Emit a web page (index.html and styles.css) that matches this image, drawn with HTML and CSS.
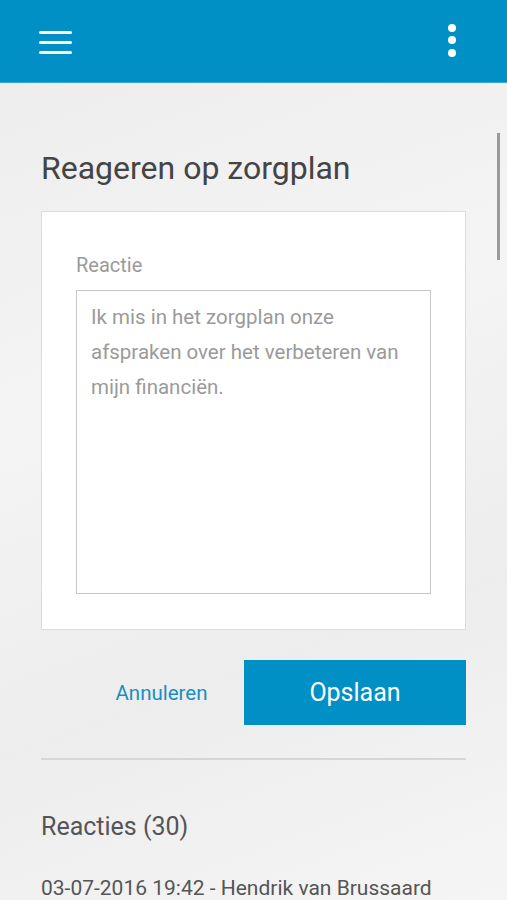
FILE: index.html
```html
<!DOCTYPE html>
<html>
<head>
    <link rel="stylesheet" href="styles.css">
</head>
<body>
    <div class="topbar">
        <svg class="icon" width="36" height="26" viewBox="0 0 36 26">
            <rect x="2" y="3" width="33" height="3" rx="1.5" fill="#fff"/>
            <rect x="2" y="13" width="33" height="3" rx="1.5" fill="#fff"/>
            <rect x="2" y="23" width="33" height="3" rx="1.5" fill="#fff"/>
        </svg>
        <svg class="icon" width="12" height="34" viewBox="0 0 12 34">
            <circle cx="6" cy="4" r="4" fill="#fff"/>
            <circle cx="6" cy="16" r="4" fill="#fff"/>
            <circle cx="6" cy="29" r="4" fill="#fff"/>
        </svg>
    </div>

    <div class="page">
        <div class="scrollbar"></div>
        <h1>Reageren op zorgplan</h1>

        <div class="card">
            <label class="label">Reactie</label>
            <div class="textarea">Ik mis in het zorgplan onze afspraken over het verbeteren van mijn financiën.</div>
        </div>

        <div class="actions">
            <a class="link">Annuleren</a>
            <button class="btn">Opslaan</button>
        </div>

        <hr class="divider">

        <h2>Reacties (30)</h2>
        <p class="meta">03-07-2016 19:42 - Hendrik van Brussaard</p>
    </div>
</body>
</html>
```

FILE: styles.css
```css
* {
    margin: 0;
    padding: 0;
    box-sizing: border-box;
    font-family: Roboto, 'Noto Sans', sans-serif;
}

body {
    width: 507px;
    height: 900px;
    overflow: hidden;
    background: linear-gradient(160deg, #ececec 0%, #f4f4f4 40%, #ededed 70%, #f5f5f5 100%);
}

.topbar {
    height: 83px;
    background: #0090c6;
    border-bottom: 1px solid #3aa8d4;
    display: flex;
    justify-content: space-between;
    align-items: center;
    padding: 0 49px 0 37px;
}

.icon {
    display: block;
}

.page {
    position: relative;
    padding: 66px 41px 0 41px;
}

.scrollbar {
    position: absolute;
    top: 50px;
    right: 7px;
    width: 3px;
    height: 127px;
    background: #9a9a9a;
}

h1 {
    font-size: 32px;
    font-weight: 400;
    color: #444;
    line-height: 38px;
    margin-bottom: 24px;
}

.card {
    background: #fff;
    border: 1px solid #dcdcdc;
    padding: 42px 34px 35px 34px;
}

.label {
    display: block;
    font-size: 20px;
    color: #9a9a9a;
    line-height: 22px;
    margin-bottom: 14px;
}

.textarea {
    height: 304px;
    border: 1px solid #c8c8c8;
    padding: 9px 14px;
    font-size: 20.5px;
    line-height: 35px;
    color: #9a9a9a;
    padding-right: 20px;
}

.actions {
    display: flex;
    align-items: center;
    margin-top: 30px;
}

.link {
    width: 203px;
    text-align: center;
    padding-left: 38px;
    font-size: 20.5px;
    color: #1a8fc0;
}

.btn {
    width: 222px;
    height: 65px;
    background: #0090c6;
    color: #fff;
    border: none;
    font-size: 25px;
}

.divider {
    border: none;
    border-top: 2px solid #d6d6d6;
    margin-top: 33px;
}

h2 {
    font-size: 25px;
    font-weight: 400;
    color: #555;
    margin-top: 52px;
    line-height: 30px;
}

.meta {
    font-size: 21px;
    color: #555;
    margin-top: 32px;
    line-height: 28px;
}
```
